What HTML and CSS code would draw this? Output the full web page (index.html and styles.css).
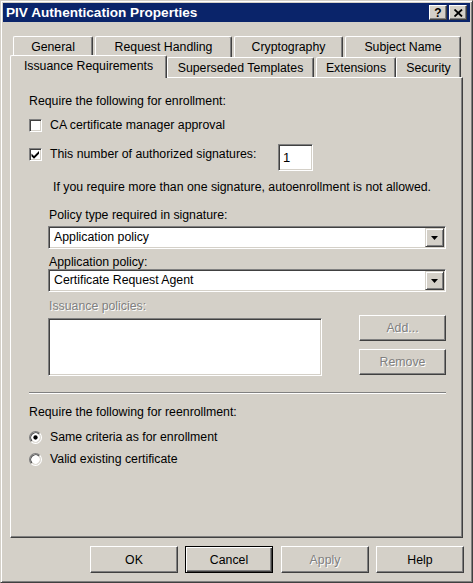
FILE: index.html
```html
<!DOCTYPE html>
<html>
<head>
<meta charset="utf-8">
<title>PIV Authentication Properties</title>
<link rel="stylesheet" href="styles.css">
</head>
<body>
<div class="window">
  <div class="titlebar">
    <span class="title">PIV Authentication Properties</span>
    <div class="caption-btns">
      <span class="cbtn help">?</span>
      <span class="cbtn close"><svg width="9" height="8" viewBox="0 0 9 8"><path d="M0.5 0.5L8 7.5M8 0.5L0.5 7.5" stroke="#000" stroke-width="1.8" fill="none"/></svg></span>
    </div>
  </div>

  <div class="tabs">
    <div class="tabrow back">
      <div class="tab w-general">General</div>
      <div class="tab w-request">Request Handling</div>
      <div class="tab w-crypto">Cryptography</div>
      <div class="tab w-subject">Subject Name</div>
    </div>
    <div class="tabrow front">
      <div class="tab sel w-issuance">Issuance Requirements</div>
      <div class="tab w-superseded">Superseded Templates</div>
      <div class="tab w-ext">Extensions</div>
      <div class="tab w-sec">Security</div>
    </div>
  </div>

  <div class="panel">
    <div class="lbl">Require the following for enrollment:</div>

    <div class="check r-ca">
      <span class="box"></span>
      <span class="ctext">CA certificate manager approval</span>
    </div>

    <div class="sigrow">
      <div class="check sig-check">
        <span class="box"><svg width="9" height="9" viewBox="0 0 9 9"><path d="M0.5 3.5L3 6L8 1V3.8L3 8.8L0.5 6.3Z" fill="#000"/></svg></span>
        <span class="ctext">This number of authorized signatures:</span>
      </div>
      <div class="edit">1</div>
    </div>

    <div class="lbl info">If you require more than one signature, autoenrollment is not allowed.</div>

    <div class="lbl sub l-policy">Policy type required in signature:</div>
    <div class="combo c-first">
      <span class="ctxt">Application policy</span>
      <span class="dd"><svg width="7" height="4" viewBox="0 0 7 4"><path d="M0 0H7L3.5 4Z" fill="#000"/></svg></span>
    </div>

    <div class="lbl sub l-app">Application policy:</div>
    <div class="combo">
      <span class="ctxt">Certificate Request Agent</span>
      <span class="dd"><svg width="7" height="4" viewBox="0 0 7 4"><path d="M0 0H7L3.5 4Z" fill="#000"/></svg></span>
    </div>

    <div class="lbl sub disabled l-iss">Issuance policies:</div>
    <div class="issrow">
      <div class="listbox"></div>
      <div class="sidebtns">
        <div class="btn disabled b-add">Add...</div>
        <div class="btn disabled b-remove">Remove</div>
      </div>
    </div>

    <div class="sep"></div>

    <div class="lbl l-re">Require the following for reenrollment:</div>
    <div class="radio r-first">
      <svg class="rad" width="13" height="13" viewBox="0 0 12 12">
        <circle cx="6" cy="6" r="5" fill="#fff"/>
        <path d="M2.11 9.89A5.5 5.5 0 0 1 9.89 2.11" stroke="#808080" fill="none"/>
        <path d="M9.89 2.11A5.5 5.5 0 0 1 2.11 9.89" stroke="#fff" fill="none"/>
        <path d="M2.82 9.18A4.5 4.5 0 0 1 9.18 2.82" stroke="#404040" fill="none"/>
        <path d="M9.18 2.82A4.5 4.5 0 0 1 2.82 9.18" stroke="#d4d0c8" fill="none"/>
        <circle cx="6" cy="6" r="2" fill="#000"/>
      </svg>
      <span class="ctext">Same criteria as for enrollment</span>
    </div>
    <div class="radio r-second">
      <svg class="rad" width="13" height="13" viewBox="0 0 12 12">
        <circle cx="6" cy="6" r="5" fill="#fff"/>
        <path d="M2.11 9.89A5.5 5.5 0 0 1 9.89 2.11" stroke="#808080" fill="none"/>
        <path d="M9.89 2.11A5.5 5.5 0 0 1 2.11 9.89" stroke="#fff" fill="none"/>
        <path d="M2.82 9.18A4.5 4.5 0 0 1 9.18 2.82" stroke="#404040" fill="none"/>
        <path d="M9.18 2.82A4.5 4.5 0 0 1 2.82 9.18" stroke="#d4d0c8" fill="none"/>
      </svg>
      <span class="ctext">Valid existing certificate</span>
    </div>
  </div>

  <div class="footer">
    <div class="btn fbtn">OK</div>
    <div class="btn fbtn default">Cancel</div>
    <div class="btn fbtn disabled b-apply">Apply</div>
    <div class="btn fbtn">Help</div>
  </div>
</div>
</body>
</html>
```

FILE: styles.css
```css
html, body {
  margin: 0;
  padding: 0;
  background: #d4d0c8;
}

.window {
  width: 473px;
  height: 583px;
  box-sizing: border-box;
  background: #d4d0c8;
  border: 1px solid;
  border-color: #d4d0c8 #404040 #404040 #d4d0c8;
  box-shadow: inset 1px 1px #ffffff, inset -1px -1px #808080;
  padding: 2px;
  font-family: "Liberation Sans", Arial, sans-serif;
  font-size: 12.3px;
  color: #000;
  overflow: hidden;
}

/* Title bar */
.titlebar {
  height: 19px;
  background: #0a246a;
  display: flex;
  align-items: center;
  justify-content: space-between;
  padding: 0 3px 0 3px;
}
.title {
  color: #fff;
  font-weight: bold;
  font-size: 13.6px;
}
.caption-btns {
  display: flex;
  gap: 2px;
}
.cbtn {
  width: 18px;
  height: 15px;
  box-sizing: border-box;
  background: #d4d0c8;
  border: 1px solid;
  border-color: #fff #404040 #404040 #fff;
  box-shadow: inset -1px -1px #808080;
  display: flex;
  align-items: center;
  justify-content: center;
  font-weight: bold;
  font-size: 12px;
  line-height: 12px;
}

/* Tabs */
.tabs {
  margin-top: 14px;
}
.tabrow {
  display: flex;
}
.tabrow.back {
  margin-left: 10px;
  height: 21px;
}
.tabrow.front {
  margin-left: 7px;
  height: 20px;
}
.tab {
  box-sizing: border-box;
  height: 100%;
  border-top: 1px solid #fff;
  border-left: 1px solid #fff;
  border-right: 1px solid #404040;
  box-shadow: inset -1px 0 #808080;
  border-radius: 2px 2px 0 0;
  display: flex;
  align-items: center;
  justify-content: center;
  white-space: nowrap;
  background: #d4d0c8;
}
.tab.sel {
  height: 23px;
  margin-top: -2px;
  position: relative;
  z-index: 2;
  padding-bottom: 3px;
}
.w-general { width: 80px; margin-right: 2px; }
.w-request { width: 137px; margin-right: 2px; }
.w-crypto { width: 109px; margin-right: 2px; }
.w-subject { width: 116px; }
.w-issuance { width: 157px; }
.w-superseded { width: 147px; margin-right: 2px; }
.w-ext { width: 80px; }
.w-sec { width: 65px; }

/* Panel */
.panel {
  margin-left: 7px;
  width: 453px;
  height: 461px;
  box-sizing: border-box;
  border-top: 1px solid #fff;
  border-left: 1px solid #fff;
  border-right: 1px solid #404040;
  border-bottom: 1px solid #404040;
  box-shadow: inset -1px -1px #808080;
  padding: 16px 0 0 18px;
  position: relative;
  z-index: 1;
}

.lbl {
  height: 14px;
  line-height: 14px;
  white-space: nowrap;
}
.lbl.sub { margin-left: 20px; }
.info { margin-left: 24px; margin-top: 9px; }
.l-policy { margin-top: 14px; }
.l-app { margin-top: 6px; }
.l-iss { margin-top: 7px; }
.l-re { margin-top: 11px; }

.disabled {
  color: #808080;
  text-shadow: 1px 1px 0 #fff;
}

/* Checkboxes */
.check {
  display: flex;
  align-items: center;
  height: 13px;
}
.r-ca { margin-top: 11px; }
.box {
  width: 13px;
  height: 13px;
  box-sizing: border-box;
  background: #fff;
  border: 1px solid;
  border-color: #808080 #fff #fff #808080;
  box-shadow: inset 1px 1px #404040, inset -1px -1px #d4d0c8;
  display: flex;
  align-items: center;
  justify-content: center;
  flex: none;
}
.ctext {
  margin-left: 8px;
  line-height: 13px;
  white-space: nowrap;
}

.sigrow {
  display: flex;
  align-items: flex-start;
  margin-top: 12px;
  height: 27px;
}
.sig-check {
  width: 249px;
  margin-top: 4px;
}
.edit {
  width: 35px;
  height: 27px;
  box-sizing: border-box;
  background: #fff;
  border: 1px solid;
  border-color: #808080 #fff #fff #808080;
  box-shadow: inset 1px 1px #404040, inset -1px -1px #d4d0c8;
  padding: 0 0 0 4px;
  line-height: 25px;
  font-size: 13px;
  color: #000;
}

/* Combos */
.combo {
  margin-left: 19px;
  width: 398px;
  height: 23px;
  box-sizing: border-box;
  background: #fff;
  border: 1px solid;
  border-color: #808080 #fff #fff #808080;
  box-shadow: inset 1px 1px #404040, inset -1px -1px #d4d0c8;
  padding: 1px;
  display: flex;
  align-items: stretch;
}
.c-first { margin-top: 4px; }
.ctxt {
  flex: 1;
  padding-left: 4px;
  line-height: 19px;
}
.dd {
  width: 19px;
  box-sizing: border-box;
  background: #d4d0c8;
  border: 1px solid;
  border-color: #d4d0c8 #404040 #404040 #d4d0c8;
  box-shadow: inset 1px 1px #fff, inset -1px -1px #808080;
  display: flex;
  align-items: center;
  justify-content: center;
}

/* Issuance */
.issrow {
  display: flex;
  margin-top: 2px;
  height: 61px;
}
.listbox {
  margin-left: 19px;
  margin-top: 3px;
  width: 274px;
  height: 58px;
  box-sizing: border-box;
  background: #fff;
  border: 1px solid;
  border-color: #808080 #fff #fff #808080;
  box-shadow: inset 1px 1px #404040, inset -1px -1px #d4d0c8;
}
.sidebtns {
  margin-left: 37px;
  display: flex;
  flex-direction: column;
  gap: 8px;
}

.btn {
  box-sizing: border-box;
  background: #d4d0c8;
  border: 1px solid;
  border-color: #fff #404040 #404040 #fff;
  box-shadow: inset -1px -1px #808080;
  display: flex;
  align-items: center;
  justify-content: center;
  white-space: nowrap;
}
.b-add, .b-remove {
  width: 87px;
  height: 26px;
}

.sep {
  margin-top: 16px;
  width: 417px;
  border-top: 1px solid #808080;
  border-bottom: 1px solid #fff;
}

/* Radios */
.radio {
  display: flex;
  align-items: center;
  height: 13px;
}
.r-first { margin-top: 12px; }
.r-second { margin-top: 9px; }
.rad { flex: none; }

/* Footer */
.footer {
  display: flex;
  justify-content: flex-end;
  gap: 7px;
  margin-top: 8px;
  padding-right: 6px;
}
.fbtn {
  width: 88px;
  height: 27px;
}
.fbtn.default {
  border: 1px solid #000;
  box-shadow: inset 1px 1px #fff, inset -1px -1px #404040, inset -2px -2px #808080;
}
.b-apply { margin-left: 1px; }
```
